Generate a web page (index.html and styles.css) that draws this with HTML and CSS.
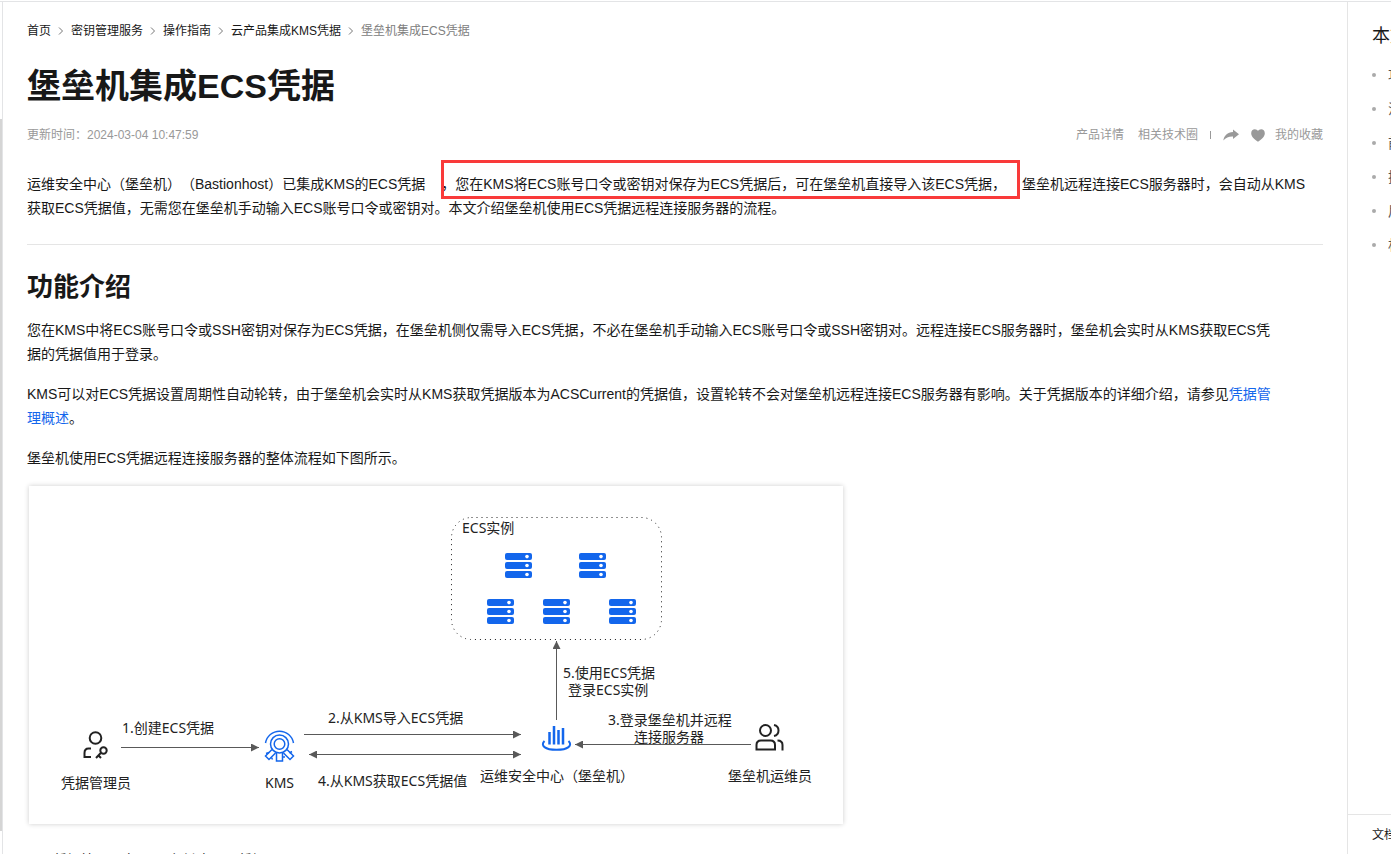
FILE: index.html
```html
<!DOCTYPE html>
<html lang="zh-CN">
<head>
<meta charset="utf-8">
<title>堡垒机集成ECS凭据</title>
<link rel="stylesheet" href="styles.css">
</head>
<body>
<div class="page">
  <div class="rail"><div class="rail-thumb"></div></div>
  <main class="content">
    <nav class="crumbs" aria-label="面包屑">
      <a href="#">首页</a>
      <svg class="chevron" viewBox="0 0 6 8"><path d="M1 0.5L4.5 4L1 7.5"/></svg>
      <a href="#">密钥管理服务</a>
      <svg class="chevron" viewBox="0 0 6 8"><path d="M1 0.5L4.5 4L1 7.5"/></svg>
      <a href="#">操作指南</a>
      <svg class="chevron" viewBox="0 0 6 8"><path d="M1 0.5L4.5 4L1 7.5"/></svg>
      <a href="#">云产品集成KMS凭据</a>
      <svg class="chevron" viewBox="0 0 6 8"><path d="M1 0.5L4.5 4L1 7.5"/></svg>
      <span class="current">堡垒机集成ECS凭据</span>
    </nav>
    <h1>堡垒机集成ECS凭据</h1>
    <div class="meta">
      <span class="updated">更新时间：2024-03-04 10:47:59</span>
      <div class="actions">
        <div class="links">
          <a href="#">产品详情</a>
          <a href="#">相关技术圈</a>
        </div>
        <span class="divider"></span>
        <button type="button" aria-label="分享"><svg class="share" viewBox="0 0 16 12"><path d="M10 0.5L16 5.3L10 10V7.4C6 7.2 3 8.4 0.3 11.5C1.2 6.6 4.4 3.4 10 3.1Z"/></svg></button>
        <button type="button" class="favorite"><svg class="heart" viewBox="0 0 14 13"><path d="M7 12.8C3 9.8 0.2 7.5 0.2 4.2C0.2 1.8 1.8 0.3 3.8 0.3C5.2 0.3 6.4 1 7 2.1C7.6 1 8.8 0.3 10.2 0.3C12.2 0.3 13.8 1.8 13.8 4.2C13.8 7.5 11 9.8 7 12.8Z"/></svg>我的收藏</button>
      </div>
    </div>
    <p class="intro">运维安全中心（堡垒机）（Bastionhost）已集成KMS的ECS凭据<mark>，您在KMS将ECS账号口令或密钥对保存为ECS凭据后，可在堡垒机直接导入该ECS凭据，</mark>堡垒机远程连接ECS服务器时，会自动从KMS<br>获取ECS凭据值，无需您在堡垒机手动输入ECS账号口令或密钥对。本文介绍堡垒机使用ECS凭据远程连接服务器的流程。</p>
    <section>
      <h2>功能介绍</h2>
      <p>您在KMS中将ECS账号口令或SSH密钥对保存为ECS凭据，在堡垒机侧仅需导入ECS凭据，不必在堡垒机手动输入ECS账号口令或SSH密钥对。远程连接ECS服务器时，堡垒机会实时从KMS获取ECS凭<br>据的凭据值用于登录。</p>
      <p>KMS可以对ECS凭据设置周期性自动轮转，由于堡垒机会实时从KMS获取凭据版本为ACSCurrent的凭据值，设置轮转不会对堡垒机远程连接ECS服务器有影响。关于凭据版本的详细介绍，请参见<a href="#">凭据管<br>理概述</a>。</p>
      <p>堡垒机使用ECS凭据远程连接服务器的整体流程如下图所示。</p>
      <figure>
        <svg class="diagram" viewBox="29 486 814 338" role="img" aria-label="整体流程">
          <defs>
            <g id="server">
              <rect width="27" height="7" rx="2"/><rect y="9" width="27" height="7" rx="2"/><rect y="18" width="27" height="7" rx="2"/>
              <g fill="#fff"><circle cx="22" cy="3.6" r="1.8"/><circle cx="22" cy="12.5" r="1.8"/><circle cx="22" cy="21.5" r="1.8"/></g>
            </g>
            <marker id="arrow" viewBox="0 0 8 8" refX="8" refY="4" markerWidth="8" markerHeight="8" markerUnits="userSpaceOnUse" orient="auto-start-reverse"><path d="M0 0L8 4L0 8Z" fill="#595959"/></marker>
          </defs>
          <rect class="zone" x="451.500" y="517.500" width="210" height="122" rx="20"/>
          <g fill="#1366ec">
            <use href="#server" x="505" y="553"/><use href="#server" x="579" y="553"/>
            <use href="#server" x="487" y="599"/><use href="#server" x="543" y="599"/><use href="#server" x="609" y="599"/>
          </g>
          <g class="wires">
            <path d="M121 747.500H259" marker-end="url(#arrow)"/>
            <path d="M304 734.500H521" marker-end="url(#arrow)"/>
            <path d="M309 754.500H521" marker-start="url(#arrow)" marker-end="url(#arrow)"/>
            <path d="M556.500 720V641" marker-end="url(#arrow)"/>
            <path d="M751 744.500H575" marker-end="url(#arrow)"/>
          </g>
          <g class="dark">
            <circle cx="95.500" cy="738" r="5.800"/>
            <path d="M91 748.500H88.500Q84.500 748.500 84.500 753V757H91"/>
            <circle cx="103.500" cy="750.500" r="3.200"/><path d="M101 752.800L96 758M98.500 755.500L101 758"/>
            <circle cx="765.500" cy="730.500" r="5.500"/>
            <path d="M756.500 749.500V745Q756.500 740.500 761 740.500H770.500Q775 740.500 775 745V749.500Z"/>
            <path d="M774 725Q778.500 726 778.500 730.500Q778.500 735 774 736M777.500 740.500Q782.500 740.500 782.500 745V750.500"/>
          </g>
          <g class="blue">
            <path d="M265.500 743A14.200 14.200 0 0 1 293.500 743"/>
            <circle cx="279.500" cy="744" r="9"/><circle cx="279.500" cy="744" r="5.300"/>
            <path d="M276.500 752.500V761H282.500V752.500"/>
            <path d="M272 749.500L265.500 756L269 759.500L275.500 753M287 749.500L293.500 756L290 759.500L283.500 753"/>
            <path d="M269 752.500L266 753.500M271.500 757.500L272.500 759.500M283 757H285M289.500 753L292 751.500"/>
          </g>
          <g class="blue">
            <path d="M549.500 732V744.500M554 726V744.500M558.500 730V744.500M563 728V744.500" stroke-width="2.500"/>
            <path d="M544.500 741C540 745.500 545 749.800 556.500 749.800C568 749.800 573 745.500 568.500 741" stroke-width="2"/>
          </g>
          <g class="labels">
            <text x="462" y="533">ECS实例</text>
            <text x="563" y="678">5.使用ECS凭据</text>
            <text x="568" y="695">登录ECS实例</text>
            <text x="122" y="733">1.创建ECS凭据</text>
            <text x="328" y="723">2.从KMS导入ECS凭据</text>
            <text x="318" y="786">4.从KMS获取ECS凭据值</text>
            <text x="608" y="725">3.登录堡垒机并远程</text>
            <text x="634" y="742">连接服务器</text>
            <text x="61" y="788">凭据管理员</text>
            <text x="265" y="788">KMS</text>
            <text x="480" y="781">运维安全中心（堡垒机）</text>
            <text x="728" y="781">堡垒机运维员</text>
          </g>
        </svg>
      </figure>
      <ol><li>凭据管理员在KMS中创建ECS凭据。</li></ol>
    </section>
  </main>
  <aside class="toc">
    <div class="toc-body">
      <h3>本文导读</h3>
      <ul>
        <li><a href="#">功能介绍</a></li>
        <li><a href="#">注意事项</a></li>
        <li><a href="#">前提条件</a></li>
        <li><a href="#">操作步骤</a></li>
        <li><a href="#">后续操作</a></li>
        <li><a href="#">相关文档</a></li>
      </ul>
    </div>
    <div class="toc-foot">文档反馈</div>
  </aside>
</div>
</body>
</html>
```
FILE: styles.css
```css
* { box-sizing: border-box; }
body {
  margin: 0;
  padding-top: 1px;
  height: 100vh;
  overflow: hidden;
  background: #fff;
  color: #181818;
  font-family: "Liberation Sans", "Noto Sans CJK SC", sans-serif;
  font-size: 14px;
  line-height: 24px;
  text-spacing-trim: space-all;
}
a { color: inherit; text-decoration: none; }
button { border: 0; padding: 0; background: none; color: inherit; font: inherit; }
.page { display: flex; height: 100%; border-top: 1px solid #e3e4e6; }
.rail { flex: none; width: 3px; border-right: 1px solid #e3e4e6; padding-top: 117px; }
.rail-thumb { width: 2px; height: 712px; background: #d5d5d5; }
.content { flex: 1; min-width: 0; padding: 17px 24px 0; overflow: hidden; }
.crumbs { display: flex; align-items: center; gap: 7px; font-size: 12px; }
.chevron { width: 6px; height: 8px; fill: none; stroke: #777; }
.current { color: #808080; }
h1 { margin: 19px 0 0; font-size: 34px; line-height: 48px; }
.meta { display: flex; justify-content: space-between; margin-top: 13px; font-size: 12px; color: #999; }
.actions { display: flex; align-items: center; gap: 12px; }
.links { display: flex; gap: 14px; }
.divider { width: 1px; height: 8px; background: #999; }
.actions button { display: flex; align-items: center; gap: 10px; }
.share { width: 16px; height: 12px; fill: #999; }
.heart { width: 14px; height: 13px; fill: #999; }
p { margin: 0 0 16px; white-space: nowrap; }
.intro { margin: 25px 0 0; padding-bottom: 24px; border-bottom: 1px solid #e5e5e5; }
mark { position: relative; margin: 0 2px 0 16px; padding-right: 14px; background: none; color: inherit; }
mark::after { content: ""; position: absolute; inset: -16px 0 -7px; border: 3px solid #f93a3a; }
h2 { margin: 24px 0 13px; font-size: 26px; line-height: 36px; }
p a { color: #1366ec; }
figure { max-width: 817px; margin: 0; padding: 0 1px 0 2px; }
.diagram { display: block; width: 100%; box-shadow: 0 0 5px rgba(0, 0, 0, 0.2); }
.zone { fill: none; stroke: #222; stroke-dasharray: 1 4; }
.wires { fill: none; stroke: #595959; }
.dark { fill: none; stroke: #222; stroke-width: 2; }
.blue { fill: none; stroke: #1366ec; stroke-width: 1.5; }
.labels { fill: #222; font-family: "Noto Sans", "Noto Sans CJK SC", sans-serif; font-size: 14px; }
ol { margin: 24px 0 0; padding-left: 26px; }
.toc { flex: none; display: flex; flex-direction: column; width: 44px; border-left: 1px solid #e5e5e5; overflow: hidden; white-space: nowrap; }
.toc-body { flex: 1; padding: 21px 0 0 24px; }
h3 { margin: 0; font-size: 18px; font-weight: 400; line-height: 26px; }
.toc ul { margin: 9px 0 0; padding: 0; list-style: none; }
.toc li { display: flex; align-items: center; gap: 12px; height: 34px; color: #555; }
.toc li::before { content: ""; flex: none; width: 4px; height: 4px; border-radius: 50%; background: #aaa; }
.toc-foot { height: 40px; padding: 8px 0 0 24px; border-top: 1px solid #e5e5e5; font-size: 12px; }
```
